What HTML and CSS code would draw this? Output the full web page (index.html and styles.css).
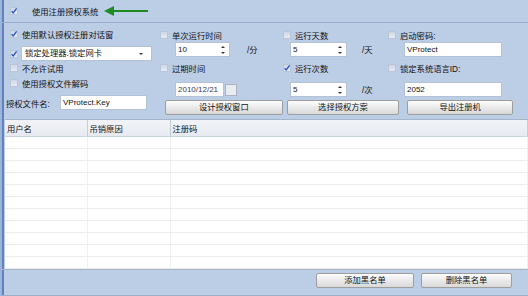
FILE: index.html
```html
<!DOCTYPE html>
<html lang="zh">
<head>
  <meta charset="UTF-8">
  <title>注册授权</title>
  <link rel="stylesheet" href="styles.css">
</head>
<body>
  <div class="app">

    <!-- barra superior -->
    <div class="topbar">
      <span class="cb on"><svg viewBox="0 0 8 8"><path d="M1.6 4.2 L3.2 6 L6.6 1.4"/></svg></span>
      <span class="toplabel">使用注册授权系统</span>
      <svg class="arrow" width="46" height="12" viewBox="0 0 46 12">
        <line x1="8" y1="6" x2="44" y2="6" stroke="#1e8c22" stroke-width="2"/>
        <polygon points="0,6 10,1 10,11" fill="#1e8c22"/>
      </svg>
    </div>

    <div class="form">
      <div class="left">
        <div class="line r1"><span class="cb on"><svg viewBox="0 0 8 8"><path d="M1.6 4.2 L3.2 6 L6.6 1.4"/></svg></span>使用默认授权注册对话窗</div>
        <div class="line r2"><span class="cb on"><svg viewBox="0 0 8 8"><path d="M1.6 4.2 L3.2 6 L6.6 1.4"/></svg></span>
          <div class="select">锁定处理器.锁定网卡<span class="caret"></span></div>
        </div>
        <div class="line r3"><span class="cb"></span>不允许试用</div>
        <div class="line r4"><span class="cb"></span>使用授权文件解码</div>
        <div class="line r5"><span class="lbl">授权文件名:</span><div class="field file">VProtect.Key</div></div>
      </div>

      <div class="right">
        <!-- fila 1 -->
        <div class="cell c2 row1"><span class="cb"></span>单次运行时间</div>
        <div class="cell c3 row1"><span class="cb"></span>运行天数</div>
        <div class="cell c4 row1"><span class="cb"></span>启动密码:</div>
        <!-- fila 2 -->
        <div class="cell c2 row2"><div class="spin s2">10<span class="arrows"><i class="up"></i><i class="dn"></i></span></div><span class="unit u2">/分</span></div>
        <div class="cell c3 row2"><div class="spin s3">5<span class="arrows"><i class="up"></i><i class="dn"></i></span></div><span class="unit">/天</span></div>
        <div class="cell c4 row2"><div class="field wide">VProtect</div></div>
        <!-- fila 3 -->
        <div class="cell c2 row3"><span class="cb"></span>过期时间</div>
        <div class="cell c3 row3"><span class="cb on"><svg viewBox="0 0 8 8"><path d="M1.6 4.2 L3.2 6 L6.6 1.4"/></svg></span>运行次数</div>
        <div class="cell c4 row3"><span class="cb"></span>锁定系统语言ID:</div>
        <!-- fila 4 -->
        <div class="cell c2 row4"><div class="date">2010/12/21</div><span class="datebox"></span></div>
        <div class="cell c3 row4"><div class="spin s3">5<span class="arrows"><i class="up"></i><i class="dn"></i></span></div><span class="unit">/次</span></div>
        <div class="cell c4 row4"><div class="field wide">2052</div></div>
        <!-- botones -->
        <div class="btnrow">
          <button class="btn b1">设计授权窗口</button>
          <button class="btn b2">选择授权方案</button>
          <button class="btn b3">导出注册机</button>
        </div>
      </div>
    </div>

    <div class="list">
      <table>
        <colgroup><col class="w1"><col class="w2"><col></colgroup>
        <thead>
          <tr><th>用户名</th><th>吊销原因</th><th>注册码</th></tr>
        </thead>
        <tbody>
          <tr><td></td><td></td><td></td></tr>
          <tr><td></td><td></td><td></td></tr>
          <tr><td></td><td></td><td></td></tr>
          <tr><td></td><td></td><td></td></tr>
          <tr><td></td><td></td><td></td></tr>
          <tr><td></td><td></td><td></td></tr>
          <tr><td></td><td></td><td></td></tr>
          <tr><td></td><td></td><td></td></tr>
          <tr><td></td><td></td><td></td></tr>
          <tr><td></td><td></td><td></td></tr>
          <tr><td></td><td></td><td></td></tr>
        </tbody>
      </table>
    </div>

    <div class="bottombar">
      <button class="btn add">添加黑名单</button>
      <button class="btn del">删除黑名单</button>
    </div>

  </div>
</body>
</html>
```

FILE: styles.css
```css
body, html {
  margin: 0;
  padding: 0;
  width: 528px;
  height: 296px;
  overflow: hidden;
  font-family: "Liberation Sans", "Noto Sans CJK SC", sans-serif;
  font-size: 8.3px;
  color: #111;
}

.app {
  width: 528px;
  height: 296px;
  box-sizing: border-box;
  background: #bccde6;
  border-left: 2px solid #9fb4d8;
  box-shadow: inset 2px 0 #5f82c0;
  overflow: hidden;
}

/* casillas */
.cb {
  display: inline-block;
  width: 6px;
  height: 6px;
  border: 1px solid #b9c5d8;
  background: linear-gradient(#cfd7e4, #e6ebf2);
  margin-right: 4px;
  vertical-align: middle;
  position: relative;
  flex: none;
}

.cb svg {
  position: absolute;
  left: -1px;
  top: -1px;
  width: 8px;
  height: 8px;
}

.cb svg path {
  fill: none;
  stroke: #2653cc;
  stroke-width: 1.3;
}

/* barra superior */
.topbar {
  height: 22px;
  border-bottom: 1px solid #98add0;
  display: flex;
  align-items: center;
  padding-left: 8px;
}

.toplabel {
  margin-left: 10px;
}

.arrow {
  margin-left: 6px;
}

/* formulario */
.form {
  display: flex;
  height: 96px;
  padding-left: 4px;
}

.left {
  width: 154px;
  padding-top: 5px;
}

.line {
  display: flex;
  align-items: center;
  padding-left: 4px;
}

.r1 { height: 12px; }
.r2 { height: 15px; margin-top: 6px; }
.r3 { height: 12px; margin-top: 1px; }
.r4 { height: 12px; margin-top: 3px; }
.r5 { height: 15px; margin-top: 6px; padding-left: 0; }

.select {
  position: relative;
  height: 13px;
  line-height: 13px;
  border: 1px solid #b4c2d8;
  background: #fff;
  padding-left: 3px;
  margin-left: -1px;
  width: 126px;
}

.caret {
  position: absolute;
  right: 8px;
  top: 6px;
  border-left: 2px solid transparent;
  border-right: 2px solid transparent;
  border-top: 2px solid #333;
}

.lbl {
  width: 54px;
}

.field {
  height: 13px;
  line-height: 13px;
  border: 1px solid #b4c2d8;
  background: #fff;
  padding-left: 2px;
  font-size: 8px;
}

.file {
  width: 83px;
}

.right {
  display: grid;
  grid-template-columns: 122px 105px 126px;
  grid-template-rows: 15px 16px 17px 23px 18px;
  padding-top: 3px;
}

.cell {
  display: flex;
  align-items: center;
}

.row1, .row3 { align-self: end; height: 12px; }
.row2, .row4 { align-self: end; height: 15px; }

.c3 { padding-left: 1px; }
.c4 { padding-left: 1px; }

.spin {
  position: relative;
  height: 13px;
  line-height: 13px;
  border: 1px solid #b4c2d8;
  background: #fff;
  padding-left: 2px;
  font-size: 8px;
}

.s2 { width: 51px; margin-left: 15px; }
.s3 { width: 53px; margin-left: 7px; }

.arrows {
  position: absolute;
  right: 4px;
  top: 2px;
  width: 4px;
  height: 9px;
}

.arrows i {
  position: absolute;
  left: 0;
  border-left: 2px solid transparent;
  border-right: 2px solid transparent;
}

.arrows .up { top: 1px; border-bottom: 2px solid #333; }
.arrows .dn { bottom: 0; border-top: 2px solid #333; }

.unit {
  margin-left: 15px;
  margin-top: -2px;
}

.u2 { margin-left: 17px; }

.date {
  width: 45px;
  height: 13px;
  line-height: 13px;
  border: 1px solid #b4c2d8;
  background: #fff;
  padding-left: 2px;
  margin-left: 15px;
  font-size: 8px;
  color: #3a3a5a;
}

.datebox {
  width: 10px;
  height: 10px;
  border: 1px solid #a9b3c2;
  background: #e9ecf0;
  margin-left: 1px;
}

.wide {
  width: 94px;
  margin-left: 16px;
}

.btnrow {
  grid-column: 1 / -1;
  align-self: end;
  display: flex;
  height: 15px;
  padding-left: 5px;
}

.btn {
  height: 15px;
  padding: 0;
  border: 1px solid #9e9e9e;
  border-radius: 2px;
  background: linear-gradient(#fdfdfd, #e6e6e6 60%, #d9d9d9);
  font-family: "Liberation Sans", "Noto Sans CJK SC", sans-serif;
  font-size: 8.3px;
  color: #111;
  line-height: 13px;
}

.b1 { width: 118px; }
.b2 { width: 113px; margin-left: 4px; }
.b3 { width: 106px; margin-left: 8px; }

/* lista */
.list {
  margin-left: 3px;
  height: 150px;
  background: #fff;
  border-top: 1px solid #a6b5ca;
  box-sizing: border-box;
  overflow: hidden;
}

.list table {
  width: 100%;
  border-collapse: collapse;
  table-layout: fixed;
}

.w1 { width: 82px; }
.w2 { width: 83px; }

.list th {
  height: 16px;
  padding: 0 0 0 2px;
  text-align: left;
  font-weight: normal;
  background: linear-gradient(#f1f3f7, #e6eaf0);
  border-right: 1px solid #c5cdd9;
  border-bottom: 1px solid #c9d2de;
  box-sizing: border-box;
}

.list td {
  height: 12px;
  padding: 0;
  border-right: 1px solid #f0f0f0;
  border-bottom: 1px solid #ececec;
  box-sizing: border-box;
}

/* barra inferior */
.bottombar {
  height: 27px;
  box-sizing: border-box;
  border-top: 1px solid #a9b6c8;
  border-bottom: 1px solid #9cadc8;
  display: flex;
  justify-content: flex-end;
  align-items: flex-start;
  padding: 3px 16px 0 0;
}

.add { width: 98px; }
.del { width: 91px; margin-left: 7px; }
```
